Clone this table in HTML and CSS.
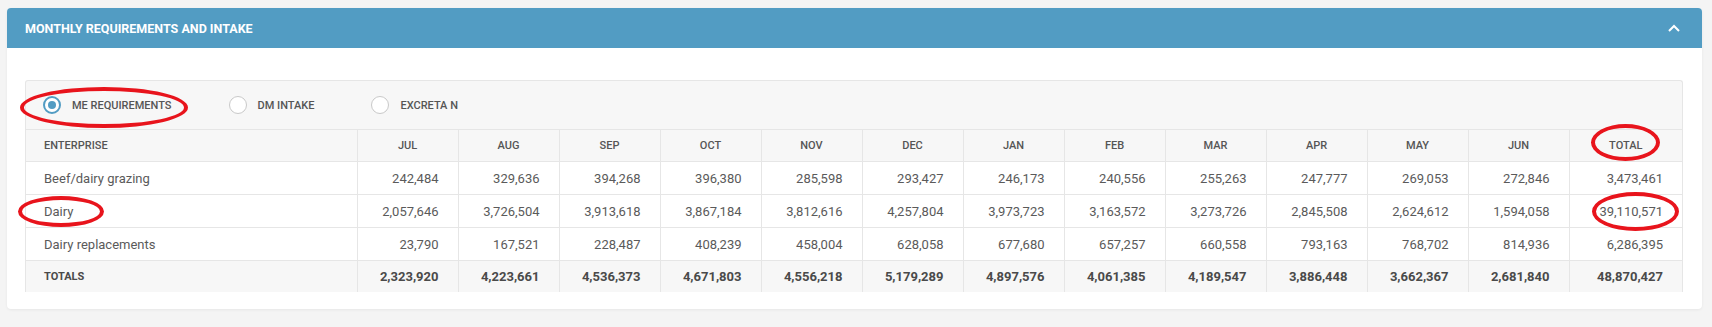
FILE: index.html
```html
<!DOCTYPE html>
<html lang="en">

<head>
    <meta charset="UTF-8">
    <meta name="viewport" content="width=device-width, initial-scale=1.0">
    <title>Monthly requirements and intake</title>
    <link rel="stylesheet" href="styles.css">
</head>

<body>
    <div class="card">
        <div class="card-head">
            <span class="card-title">MONTHLY REQUIREMENTS AND INTAKE</span>
            <svg class="chevron" width="12" height="8" viewBox="0 0 12 8">
                <polyline points="1,7 6,2 11,7" fill="none" stroke="#fff" stroke-width="2" />
            </svg>
        </div>

        <div class="card-body">
            <div class="panel">
                <div class="radios">
                    <label class="radio checked"><span class="dot"></span>ME REQUIREMENTS</label>
                    <label class="radio"><span class="dot"></span>DM INTAKE</label>
                    <label class="radio"><span class="dot"></span>EXCRETA N</label>
                </div>

                <table class="grid">
                    <colgroup>
                        <col class="c-name">
                        <col class="c-month"><col class="c-month"><col class="c-month"><col class="c-month">
                        <col class="c-month"><col class="c-month"><col class="c-month"><col class="c-month">
                        <col class="c-month"><col class="c-month"><col class="c-month"><col class="c-month">
                        <col>
                    </colgroup>
                    <thead>
                        <tr>
                            <th class="name">ENTERPRISE</th>
                            <th>JUL</th><th>AUG</th><th>SEP</th><th>OCT</th><th>NOV</th><th>DEC</th>
                            <th>JAN</th><th>FEB</th><th>MAR</th><th>APR</th><th>MAY</th><th>JUN</th>
                            <th>TOTAL</th>
                        </tr>
                    </thead>
                    <tbody id="rows"></tbody>
                </table>
            </div>
        </div>
    </div>

    <!-- annotation marks -->
    <div class="mark m-radio"></div>
    <div class="mark m-total"></div>
    <div class="mark m-dairy"></div>
    <div class="mark m-sum"></div>

    <script>
        const data = [
            ['Beef/dairy grazing', 242484, 329636, 394268, 396380, 285598, 293427, 246173, 240556, 255263, 247777, 269053, 272846],
            ['Dairy', 2057646, 3726504, 3913618, 3867184, 3812616, 4257804, 3973723, 3163572, 3273726, 2845508, 2624612, 1594058],
            ['Dairy replacements', 23790, 167521, 228487, 408239, 458004, 628058, 677680, 657257, 660558, 793163, 768702, 814936]
        ]

        const fmt = (n) => n.toLocaleString('en-US')
        const tbody = document.getElementById('rows')
        let sums = new Array(13).fill(0)
        let html = ''

        data.forEach((row) => {
            let total = 0
            html += `<tr><td class="name">${row[0]}</td>`
            for (let i = 1; i < row.length; i++) {
                total += row[i]
                sums[i - 1] += row[i]
                html += `<td>${fmt(row[i])}</td>`
            }
            sums[12] += total
            html += `<td>${fmt(total)}</td></tr>`
        })

        html += `<tr class="totals"><td class="name">TOTALS</td>`
        sums.forEach((s) => {
            html += `<td>${fmt(s)}</td>`
        })
        html += `</tr>`

        tbody.innerHTML = html
    </script>
</body>

</html>
```

FILE: styles.css
```css
* {
    margin: 0;
    box-sizing: border-box;
    font-family: Roboto, 'Liberation Sans', sans-serif;
}

body {
    background-color: #f4f4f4;
    color: #5a5a5a;
    padding: 8px 10px 0 7px;
    height: 327px;
    overflow: hidden;
}

.card {
    background-color: #fff;
    border-radius: 4px;
    box-shadow: 0 1px 3px rgba(0, 0, 0, 0.06);
}

.card-head {
    height: 40px;
    background-color: #529cc3;
    border-radius: 4px 4px 0 0;
    display: flex;
    align-items: center;
    justify-content: space-between;
    padding: 0 22px 0 18px;
}

.card-title {
    color: #fff;
    font-size: 12.5px;
    font-weight: 700;
}

.chevron {
    display: block;
}

.card-body {
    padding: 32px 19px 17px 18px;
}

.panel {
    border: 1px solid #e6e6e6;
    border-bottom: 0;
    border-radius: 3px 3px 0 0;
    background-color: #f7f7f7;
}

.radios {
    height: 48px;
    display: flex;
    align-items: center;
    padding-left: 17px;
}

.radio {
    display: flex;
    align-items: center;
    gap: 11px;
    font-size: 11px;
    font-weight: 500;
    color: #555;
    margin-right: 57px;
}

.dot {
    width: 18px;
    height: 18px;
    border-radius: 50%;
    border: 1px solid #c9c9c9;
    background-color: #fff;
    display: flex;
    align-items: center;
    justify-content: center;
}

.radio.checked .dot {
    border: 2px solid #529cc3;
}

.radio.checked .dot::after {
    content: '';
    width: 8px;
    height: 8px;
    border-radius: 50%;
    background-color: #529cc3;
}

.grid {
    width: 100%;
    border-collapse: collapse;
    table-layout: fixed;
}

.c-name {
    width: 331px;
}

.c-month {
    width: 101px;
}

.grid th {
    height: 32px;
    font-size: 11px;
    font-weight: 500;
    color: #555;
    text-align: center;
    border-top: 1px solid #e6e6e6;
    border-left: 1px solid #e6e6e6;
}

.grid td {
    height: 33px;
    font-size: 13px;
    text-align: right;
    padding-right: 19px;
    border-top: 1px solid #e6e6e6;
    border-left: 1px solid #e6e6e6;
    background-color: #fff;
}

.grid th.name,
.grid td.name {
    text-align: left;
    padding-left: 18px;
    border-left: 0;
}

.grid tr.totals td {
    height: 31px;
    background-color: #f7f7f7;
    font-weight: 700;
    color: #4a4a4a;
}

.grid tr.totals td.name {
    font-size: 11px;
}

.mark {
    position: absolute;
    border: 4px solid #e8141c;
    border-radius: 50%;
}

.m-radio {
    left: 20px;
    top: 87px;
    width: 168px;
    height: 41px;
}

.m-total {
    left: 1591px;
    top: 124px;
    width: 69px;
    height: 37px;
}

.m-dairy {
    left: 18px;
    top: 196px;
    width: 86px;
    height: 31px;
}

.m-sum {
    left: 1592px;
    top: 192px;
    width: 87px;
    height: 39px;
}
```
